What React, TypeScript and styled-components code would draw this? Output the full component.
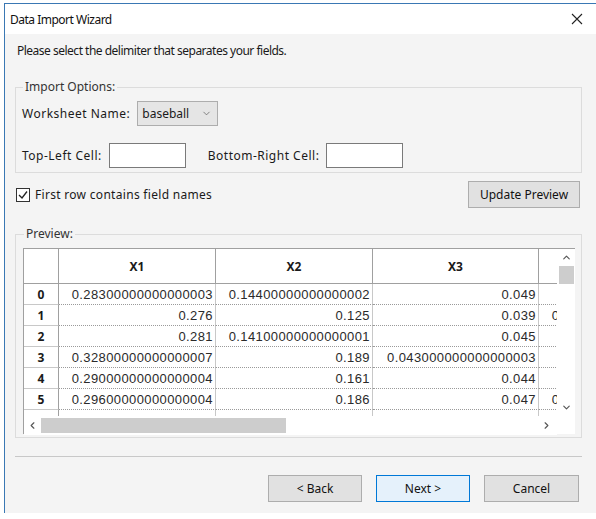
import React from "react";
import styled, { createGlobalStyle } from "styled-components";
import { ChevronUp, ChevronDown, ChevronLeft, ChevronRight } from "lucide-react";

const Global = createGlobalStyle`
  html, body { margin: 0; padding: 0; background: #ffffff; }
  body { font-family: "Noto Sans", "Noto Sans CJK KR", sans-serif; font-size: 12px; color: #1a1a1a; }
  #root { padding: 3px 0 0 4px; }
`;

const Window = styled.div`
  width: 591px;
  height: 509px;
  border-left: 1px solid #3a78b4;
  border-top: 1px solid #3a78b4;
  display: flex;
  flex-direction: column;
  background: #f4f4f4;
`;

const TitleBar = styled.div`
  height: 30px;
  background: #ffffff;
  display: flex;
  align-items: center;
  justify-content: space-between;
  padding: 0 12px 0 5px;
  font-size: 12px;
  letter-spacing: -0.5px;
  color: #111;
`;

const CloseBtn = styled.div`
  width: 14px;
  height: 14px;
  display: flex;
  align-items: center;
  justify-content: center;
`;

const Body = styled.div`
  flex: 1;
  display: flex;
  flex-direction: column;
  padding: 9px 14px 10px 10px;
`;

const Instruction = styled.div`
  line-height: 16px;
  padding-left: 2px;
  letter-spacing: -0.5px;
`;

const Group = styled.fieldset<{ $mt: number; $pad: string }>`
  margin: ${(p) => p.$mt}px 0 0 0;
  border: 1px solid #dcdcdc;
  padding: ${(p) => p.$pad};
  min-width: 0;
`;

const Legend = styled.legend`
  margin-left: 1px;
  padding: 0 2px;
  line-height: 16px;
  color: #333;
`;

const FieldRow = styled.div<{ $mt?: number }>`
  display: flex;
  align-items: center;
  height: 25px;
  margin-top: ${(p) => p.$mt ?? 0}px;
`;

const Label = styled.span<{ $ml?: number }>`
  margin-left: ${(p) => p.$ml ?? 0}px;
  margin-right: 7px;
  letter-spacing: 0.5px;
`;

const Combo = styled.div`
  height: 23px;
  width: 70px;
  border: 1px solid #adadad;
  background: #e5e5e5;
  display: flex;
  align-items: center;
  justify-content: space-between;
  padding: 0 5px 0 4px;
  box-sizing: content-box;
`;

const TextBox = styled.div`
  width: 75px;
  height: 23px;
  border: 1px solid #7a7a7a;
  background: #fff;
`;

const OptionsRow = styled.div`
  display: flex;
  align-items: center;
  justify-content: space-between;
  margin-top: 8px;
  padding: 0 2px 0 1px;
`;

const CheckLabel = styled.label`
  display: flex;
  align-items: center;
  gap: 5px;
  letter-spacing: 0.3px;
`;

const Box = styled.span`
  width: 12px;
  height: 12px;
  border: 1px solid #333;
  background: #fff;
  display: flex;
  align-items: center;
  justify-content: center;
`;

const Button = styled.div<{ $primary?: boolean; $w: number }>`
  width: ${(p) => p.$w}px;
  height: 27px;
  box-sizing: border-box;
  border: 1px solid ${(p) => (p.$primary ? "#0078d7" : "#adadad")};
  background: ${(p) => (p.$primary ? "#e5f1fb" : "#e1e1e1")};
  display: flex;
  align-items: center;
  justify-content: center;
  color: #111;
`;

const GridFrame = styled.div`
  display: grid;
  grid-template-columns: 1fr 18px;
  grid-template-rows: 167px 19px;
  border-left: 1px solid #a0a0a0;
  border-top: 1px solid #a0a0a0;
  background: #fff;
  height: 186px;
  box-sizing: border-box;
`;

const Viewport = styled.div`
  overflow: hidden;
`;

const Table = styled.div`
  display: grid;
  grid-template-columns: 35px 157px 157px 166px 157px;
  grid-auto-rows: 21px;
  grid-template-rows: 35px;
  width: max-content;
  font-family: "Liberation Sans", "Noto Sans", sans-serif;
`;

const HeadCell = styled.div`
  border-right: 1px solid #a0a0a0;
  border-bottom: 1px solid #a0a0a0;
  display: flex;
  align-items: center;
  justify-content: center;
  font-weight: bold;
  font-family: "Noto Sans", sans-serif;
  font-size: 12px;
  background: #fff;
`;

const RowHead = styled(HeadCell)`
  border-bottom: 1px solid #c8c8c8;
`;

const Cell = styled.div`
  border-right: 1px solid #c8c8c8;
  border-bottom: 1px dotted #9a9a9a;
  display: flex;
  align-items: center;
  justify-content: flex-end;
  padding-right: 2px;
  font-size: 13px;
  letter-spacing: 0.4px;
  color: #2a2a2a;
  white-space: nowrap;
  overflow: hidden;
`;

const VScroll = styled.div`
  background: #fff;
  display: flex;
  flex-direction: column;
  align-items: center;
  padding-top: 3px;
  box-sizing: border-box;
`;

const VThumb = styled.div`
  width: 15px;
  height: 18px;
  background: #cdcdcd;
  margin-top: 3px;
`;

const Spacer = styled.div`
  flex: 1;
`;

const HScroll = styled.div`
  display: flex;
  align-items: center;
  background: #fff;
  padding: 0 5px 0 3px;
`;

const HThumb = styled.div`
  width: 245px;
  height: 15px;
  background: #cdcdcd;
  margin-left: 3px;
`;

const Separator = styled.div`
  height: 1px;
  background: #c8c8c8;
  margin-top: 18px;
`;

const Footer = styled.div`
  display: flex;
  justify-content: flex-end;
  gap: 14px;
  margin-top: 18px;
  padding-right: 3px;
`;

const X = () => (
  <svg width="12" height="12" viewBox="0 0 12 12">
    <path d="M1 1 L11 11 M11 1 L1 11" stroke="#222" strokeWidth="1.1" />
  </svg>
);

const Check = () => (
  <svg width="10" height="10" viewBox="0 0 10 10">
    <path d="M1 5 L4 8 L9 1.5" fill="none" stroke="#222" strokeWidth="1.3" />
  </svg>
);

const rows: string[][] = [
  ["0.28300000000000003", "0.14400000000000002", "0.049", "0.5"],
  ["0.276", "0.125", "0.039", "0.05300000000000001"],
  ["0.281", "0.14100000000000001", "0.045", "0.4"],
  ["0.32800000000000007", "0.189", "0.043000000000000003", "0.5"],
  ["0.29000000000000004", "0.161", "0.044", "0.3"],
  ["0.29600000000000004", "0.186", "0.047", "0.05800000000000001"],
  ["0.34100000000000003", "0.14300000000000001", "0.051", "0.2"],
];

export default function App() {
  return (
    <>
      <Global />
      <Window>
        <TitleBar>
          <span>Data Import Wizard</span>
          <CloseBtn>
            <X />
          </CloseBtn>
        </TitleBar>
        <Body>
          <Instruction>Please select the delimiter that separates your fields.</Instruction>
          <Group $mt={20} $pad="6px 6px 4px 6px">
            <Legend>Import Options:</Legend>
            <FieldRow>
              <Label>Worksheet Name:</Label>
              <Combo>
                <span>baseball</span>
                <ChevronDown size={11} strokeWidth={1.5} color="#555" />
              </Combo>
            </FieldRow>
            <FieldRow $mt={17}>
              <Label>Top-Left Cell:</Label>
              <TextBox />
              <Label $ml={22}>Bottom-Right Cell:</Label>
              <TextBox />
            </FieldRow>
          </Group>
          <OptionsRow>
            <CheckLabel>
              <Box>
                <Check />
              </Box>
              <span>First row contains field names</span>
            </CheckLabel>
            <Button $w={112}>Update Preview</Button>
          </OptionsRow>
          <Group $mt={18} $pad="6px 6px 3px 7px">
            <Legend>Preview:</Legend>
            <GridFrame>
              <Viewport>
                <Table>
                  <HeadCell />
                  <HeadCell>X1</HeadCell>
                  <HeadCell>X2</HeadCell>
                  <HeadCell>X3</HeadCell>
                  <HeadCell>X4</HeadCell>
                  {rows.map((r, i) => (
                    <React.Fragment key={i}>
                      <RowHead>{i}</RowHead>
                      {r.map((v, j) => (
                        <Cell key={j}>{v}</Cell>
                      ))}
                    </React.Fragment>
                  ))}
                </Table>
              </Viewport>
              <VScroll>
                <ChevronUp size={11} strokeWidth={2.5} color="#555" />
                <VThumb />
                <Spacer />
                <ChevronDown size={11} strokeWidth={2.5} color="#555" style={{ marginBottom: 3 }} />
              </VScroll>
              <HScroll>
                <ChevronLeft size={11} strokeWidth={2.5} color="#555" />
                <HThumb />
                <Spacer />
                <ChevronRight size={11} strokeWidth={2.5} color="#555" />
              </HScroll>
              <div />
            </GridFrame>
          </Group>
          <Separator />
          <Footer>
            <Button $w={94}>&lt; Back</Button>
            <Button $w={94} $primary>
              Next &gt;
            </Button>
            <Button $w={95}>Cancel</Button>
          </Footer>
        </Body>
      </Window>
    </>
  );
}
